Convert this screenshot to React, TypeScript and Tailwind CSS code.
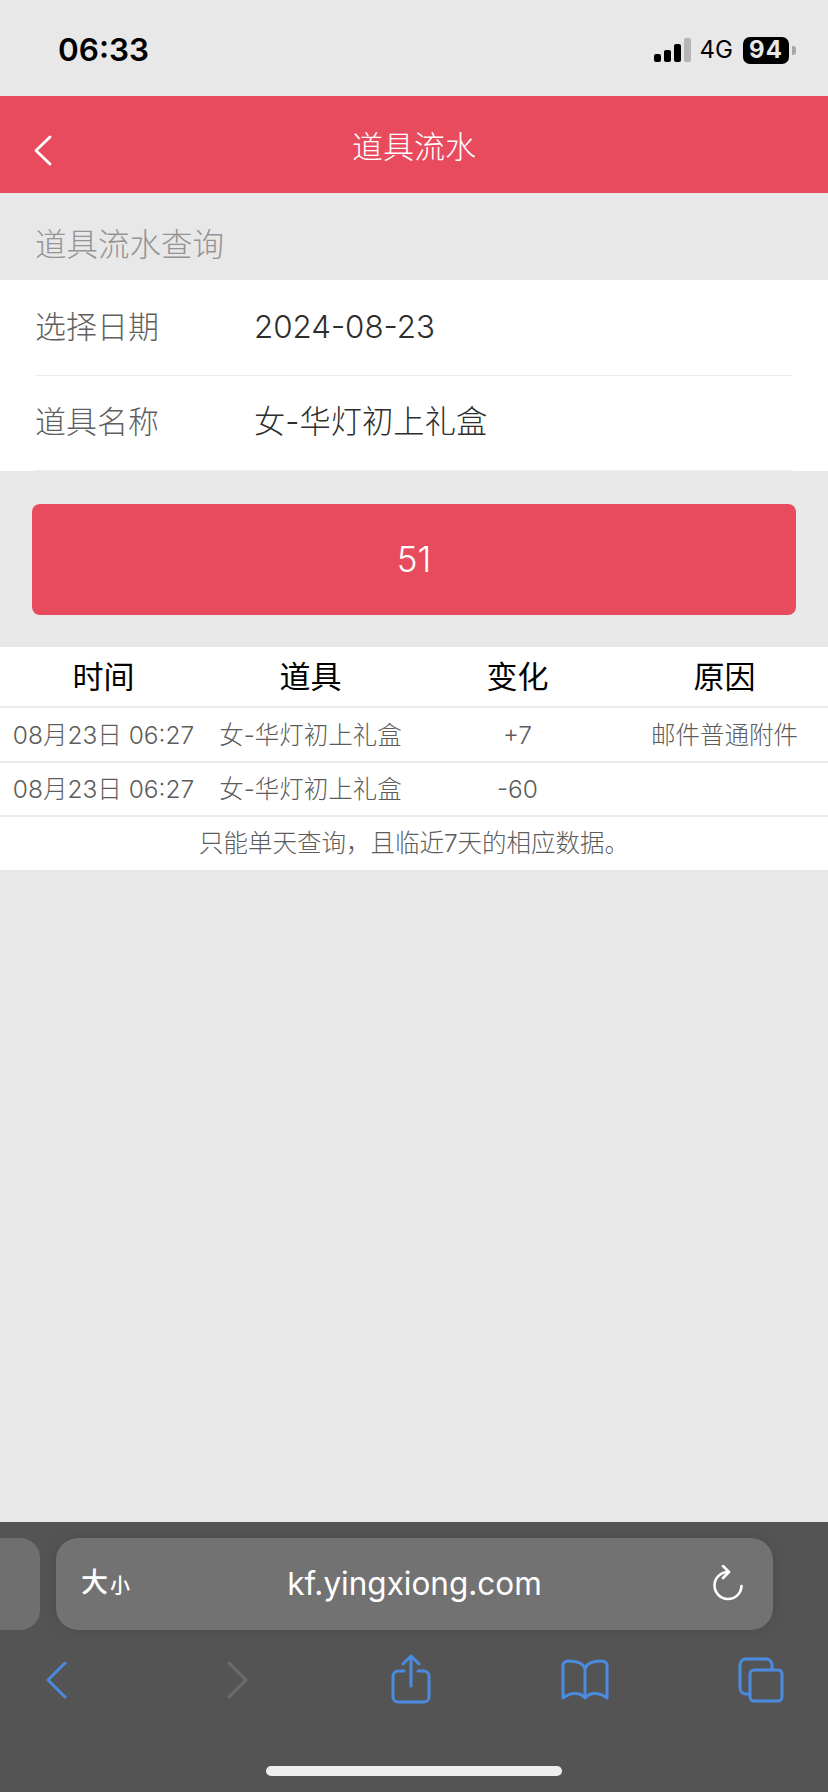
import React from 'react';

const sans = { fontFamily: 'Inter, "Noto Sans CJK SC", "Noto Sans", sans-serif' };

const rows = [
  { time: '08月23日 06:27', item: '女-华灯初上礼盒', change: '+7', reason: '邮件普通附件' },
  { time: '08月23日 06:27', item: '女-华灯初上礼盒', change: '-60', reason: '' },
];

function StatusBar() {
  return (
    <div className="h-[96px] shrink-0 flex items-center pl-[58px] pr-[32px] pt-[4px]">
      <span className="font-semibold text-[31.5px] leading-none text-black">06:33</span>
      <div className="ml-auto flex items-center">
        <svg width="37" height="24" viewBox="0 0 37 24">
          <rect x="0" y="16" width="7" height="8" rx="2" fill="#000" />
          <rect x="10" y="12" width="7" height="12" rx="2" fill="#000" />
          <rect x="20" y="6" width="7" height="18" rx="2" fill="#000" />
          <rect x="30" y="0" width="7" height="24" rx="2" fill="#b5b5b5" />
        </svg>
        <span className="ml-[9px] text-[24px] leading-none text-black">4G</span>
        <div className="ml-[10px] w-[46px] h-[27px] rounded-[7px] bg-black flex items-center justify-center">
          <span className="font-bold text-[24px] leading-none text-[#e8e8e8] tracking-[1px]">94</span>
        </div>
        <div className="ml-[3px] w-[4px] h-[9px] rounded-r-[3px] bg-[#a8a8a8]" />
      </div>
    </div>
  );
}

function NavBar() {
  return (
    <div className="relative h-[97px] shrink-0 bg-[#e84b5d] flex items-center justify-center">
      <svg className="absolute left-[33px] top-[39px]" width="19" height="31" viewBox="0 0 19 31" fill="none">
        <path d="M17 2 L3 15.5 L17 29" stroke="#fff" strokeWidth="2.8" strokeLinecap="round" strokeLinejoin="round" />
      </svg>
      <span className="text-[31px] leading-none text-white pt-[3px] font-light">道具流水</span>
    </div>
  );
}

function FormRow({ label, value }: { label: string; value: string }) {
  return (
    <div className="ml-[35px] mr-[35px] h-[95.5px] flex items-center border-b border-[#ececec] font-light">
      <span className="w-[219px] text-[31px] leading-none text-[#5f5f5f] pb-[2px]">{label}</span>
      <span className="text-[31.3px] leading-none text-[#2e2e2e]">{value}</span>
    </div>
  );
}

function ToolbarIcons() {
  return (
    <div className="flex items-start pl-[45px] pt-[24px]">
      <svg className="mt-[7px]" width="22" height="38" viewBox="0 0 22 38" fill="none">
        <path d="M20 2 L3 19 L20 36" stroke="#4a8be0" strokeWidth="3" strokeLinecap="round" strokeLinejoin="round" />
      </svg>
      <svg className="ml-[160px] mt-[7px]" width="22" height="38" viewBox="0 0 22 38" fill="none">
        <path d="M2 2 L19 19 L2 36" stroke="#6c6c6c" strokeWidth="3" strokeLinecap="round" strokeLinejoin="round" />
      </svg>
      <svg className="ml-[142px]" width="40" height="50" viewBox="0 0 40 50" fill="none" stroke="#4a8be0" strokeWidth="3" strokeLinecap="round" strokeLinejoin="round">
        <path d="M13 17 H7 a5 5 0 0 0 -5 5 V43 a5 5 0 0 0 5 5 H33 a5 5 0 0 0 5 -5 V22 a5 5 0 0 0 -5 -5 H27" />
        <path d="M20 32 V2 M12 10 L20 2 L28 10" />
      </svg>
      <svg className="ml-[130px] mt-[5px]" width="48" height="42" viewBox="0 0 48 42" fill="none" stroke="#4a8be0" strokeWidth="3" strokeLinecap="round" strokeLinejoin="round">
        <path d="M24 9 C21 3 15 2 8 2 C5 2 3 3 2 5 V39 C10 33 19 33 24 39 C29 33 38 33 46 39 V5 C45 3 43 2 40 2 C33 2 27 3 24 9 Z" />
        <path d="M24 9 V37" />
      </svg>
      <svg className="ml-[129px] mt-[3px]" width="46" height="46" viewBox="0 0 46 46" fill="none" stroke="#4a8be0" strokeWidth="3" strokeLinejoin="round">
        <rect x="12" y="13" width="32" height="31" rx="4" />
        <path d="M12 37 H8 a6 6 0 0 1 -6 -6 V8 a6 6 0 0 1 6 -6 H28 a6 6 0 0 1 6 6 V13" />
      </svg>
    </div>
  );
}

function SafariBar() {
  return (
    <div className="h-[270px] shrink-0 bg-[#545454] pt-[16px]">
      <div className="flex gap-[16px]">
        <div className="w-[40px] h-[92px] rounded-r-[20px] bg-[#6f6f6f]" />
        <div className="w-[717px] h-[92px] rounded-[22px] bg-[#727272] shadow-[0_0_16px_rgba(0,0,0,0.1)] relative flex items-center justify-center">
          <span className="absolute left-[25px] top-[31px] flex items-end text-white font-medium">
            <span className="text-[27px] leading-none">大</span>
            <span className="text-[20px] leading-none ml-[2px]">小</span>
          </span>
          <span className="text-[31.5px] leading-none text-white pb-[1px]">kf.yingxiong.com</span>
          <svg className="absolute left-[656px] top-[27px]" width="32" height="36" viewBox="0 0 32 36" fill="none" stroke="#fff" strokeWidth="2.6" strokeLinecap="round" strokeLinejoin="round">
            <path d="M16 7 A13.5 13.5 0 1 0 29.5 21" />
            <path d="M11 1 L17 7 L11 13" />
          </svg>
        </div>
      </div>
      <ToolbarIcons />
      <div className="mt-[62px] mx-auto w-[296px] h-[10px] rounded-full bg-[#eeeeee]" />
    </div>
  );
}

export default function App() {
  return (
    <div className="h-[1792px] w-[828px] bg-[#e8e8e8] flex flex-col overflow-hidden" style={sans}>
      <StatusBar />
      <NavBar />

      <div className="h-[87px] shrink-0 flex items-center pl-[35px]">
        <span className="text-[31.5px] leading-none text-[#949494] pt-[17px] font-light">道具流水查询</span>
      </div>

      <div className="bg-white shrink-0">
        <FormRow label="选择日期" value="2024-08-23" />
        <FormRow label="道具名称" value="女-华灯初上礼盒" />
      </div>

      <div className="shrink-0 px-[32px] pt-[33px] pb-[32px]">
        <div className="h-[111px] rounded-[8px] bg-[#e84b5d] flex items-center justify-center">
          <span className="text-[35px] leading-none text-white font-light">51</span>
        </div>
      </div>

      <div className="bg-white shrink-0">
        <div className="h-[61px] grid grid-cols-4 items-center text-center border-b-2 border-[#ebebeb]">
          {['时间', '道具', '变化', '原因'].map(h => (
            <span key={h} className="text-[31px] leading-none text-black">{h}</span>
          ))}
        </div>
        {rows.map((r, i) => (
          <div key={i} className="h-[54.5px] grid grid-cols-4 items-center text-center border-b-2 border-[#ebebeb] text-[24.5px] leading-none text-[#5c5c5c] font-light pt-[1px]">
            <span className="whitespace-nowrap">{r.time}</span>
            <span className="whitespace-nowrap">{r.item}</span>
            <span>{r.change}</span>
            <span className="whitespace-nowrap">{r.reason}</span>
          </div>
        ))}
        <div className="h-[53px] flex items-center justify-center text-[24.5px] leading-none text-[#5c5c5c] font-light">
          只能单天查询，且临近7天的相应数据。
        </div>
      </div>

      <div className="flex-1" />
      <SafariBar />
    </div>
  );
}
